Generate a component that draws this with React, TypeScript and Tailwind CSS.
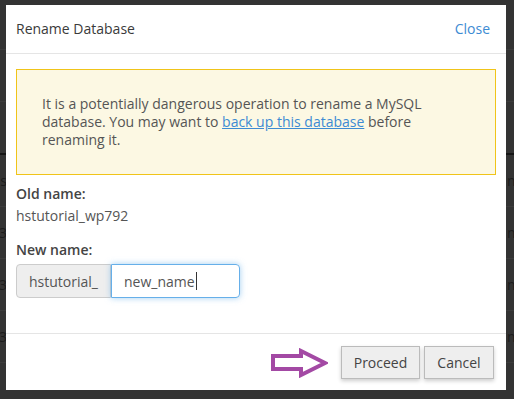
import React from 'react';

const rows = [
  { left: 's', right: 'n' },
  { left: '3', right: 'n' },
  { left: '3', right: 'n' },
  { left: '3', right: 'n' },
];

function PageBehind() {
  return (
    <div className="flex flex-col w-full h-full bg-[#333333] text-[#1c1c1c] text-[14px]">
      <div className="h-[50px] border-b border-[#3c3c3c]" />
      <div className="h-[52px] border-b border-[#3c3c3c]" />
      <div className="h-[53px] border-b-2 border-[#151515]" />
      {rows.map((r, i) => (
        <div key={i} className="h-[52px] flex items-center justify-between border-b border-[#3c3c3c]">
          <div className="w-[6px] overflow-hidden flex justify-end">
            <span className="-mr-[1px]">{r.left}</span>
          </div>
          <div className="w-[8px] overflow-hidden flex justify-start">
            <span className="ml-[1px]">{r.right}</span>
          </div>
        </div>
      ))}
    </div>
  );
}

function Arrow() {
  return (
    <svg width="58" height="30" viewBox="0 0 58 30" className="mr-[13px] mt-[2px]">
      <polygon
        points="3,8 31,8 31,3 55,15 31,27 31,21 3,21"
        fill="none"
        stroke="#a349a4"
        strokeWidth="4"
        strokeLinejoin="miter"
      />
    </svg>
  );
}

export default function App() {
  return (
    <div
      className="relative w-[514px] h-[399px] overflow-hidden"
      style={{ fontFamily: '"Open Sans", "Liberation Sans", sans-serif' }}
    >
      <PageBehind />

      {/* Modal */}
      <div className="absolute left-[6px] top-[5px] w-[500px] h-[385px] bg-white flex flex-col text-[14px] text-[#333]">
        {/* Header */}
        <div className="h-[49px] flex items-center justify-between pl-[10px] pr-[16px] border-b border-[#e5e5e5]">
          <span className="text-[14px] text-[#3a3a3a] mt-[-2px]">Rename Database</span>
          <span className="text-[14px] text-[#3d8bd3] mt-[-2px]">Close</span>
        </div>

        {/* Body */}
        <div className="flex-1 px-[10px] pt-[15px]">
          <div className="border border-[#f0c419] bg-[#fcf8e3] px-[25px] py-[25px] text-[#555] leading-[18px]">
            It is a potentially dangerous operation to rename a MySQL database. You may want to{' '}
            <a className="text-[#3d8bd3] underline">back up this database</a> before renaming it.
          </div>

          <div className="mt-[9px] font-semibold leading-[20px] text-[#444]">Old name:</div>
          <div className="mt-[2px] leading-[20px] text-[#555]">hstutorial_wp792</div>

          <div className="mt-[14px] font-semibold leading-[20px] text-[#444]">New name:</div>
          <div className="mt-[4px] flex h-[34px]">
            <div className="w-[95px] flex items-center justify-center bg-[#eeeeee] border border-[#cccccc] rounded-l-[4px] text-[#555]">
              hstutorial_
            </div>
            <div className="w-[129px] flex items-center pl-[12px] border border-[#66afe9] rounded-r-[4px] shadow-[0_0_6px_rgba(102,175,233,0.6)] text-[#555]">
              new_name<span className="w-px h-[18px] bg-[#333] ml-[1px]" />
            </div>
          </div>
        </div>

        {/* Footer */}
        <div className="h-[57px] border-t border-[#e5e5e5] flex items-start justify-end pr-[12px] pt-[12px]">
          <Arrow />
          <button className="h-[33px] w-[79px] bg-[#eeeeee] border border-[#bbbbbb] text-[#444] shadow-[0_2px_4px_rgba(0,0,0,0.2)]">
            Proceed
          </button>
          <button className="ml-[4px] h-[33px] w-[70px] bg-[#eeeeee] border border-[#bbbbbb] text-[#444] shadow-[0_2px_4px_rgba(0,0,0,0.2)]">
            Cancel
          </button>
        </div>
      </div>
    </div>
  );
}
